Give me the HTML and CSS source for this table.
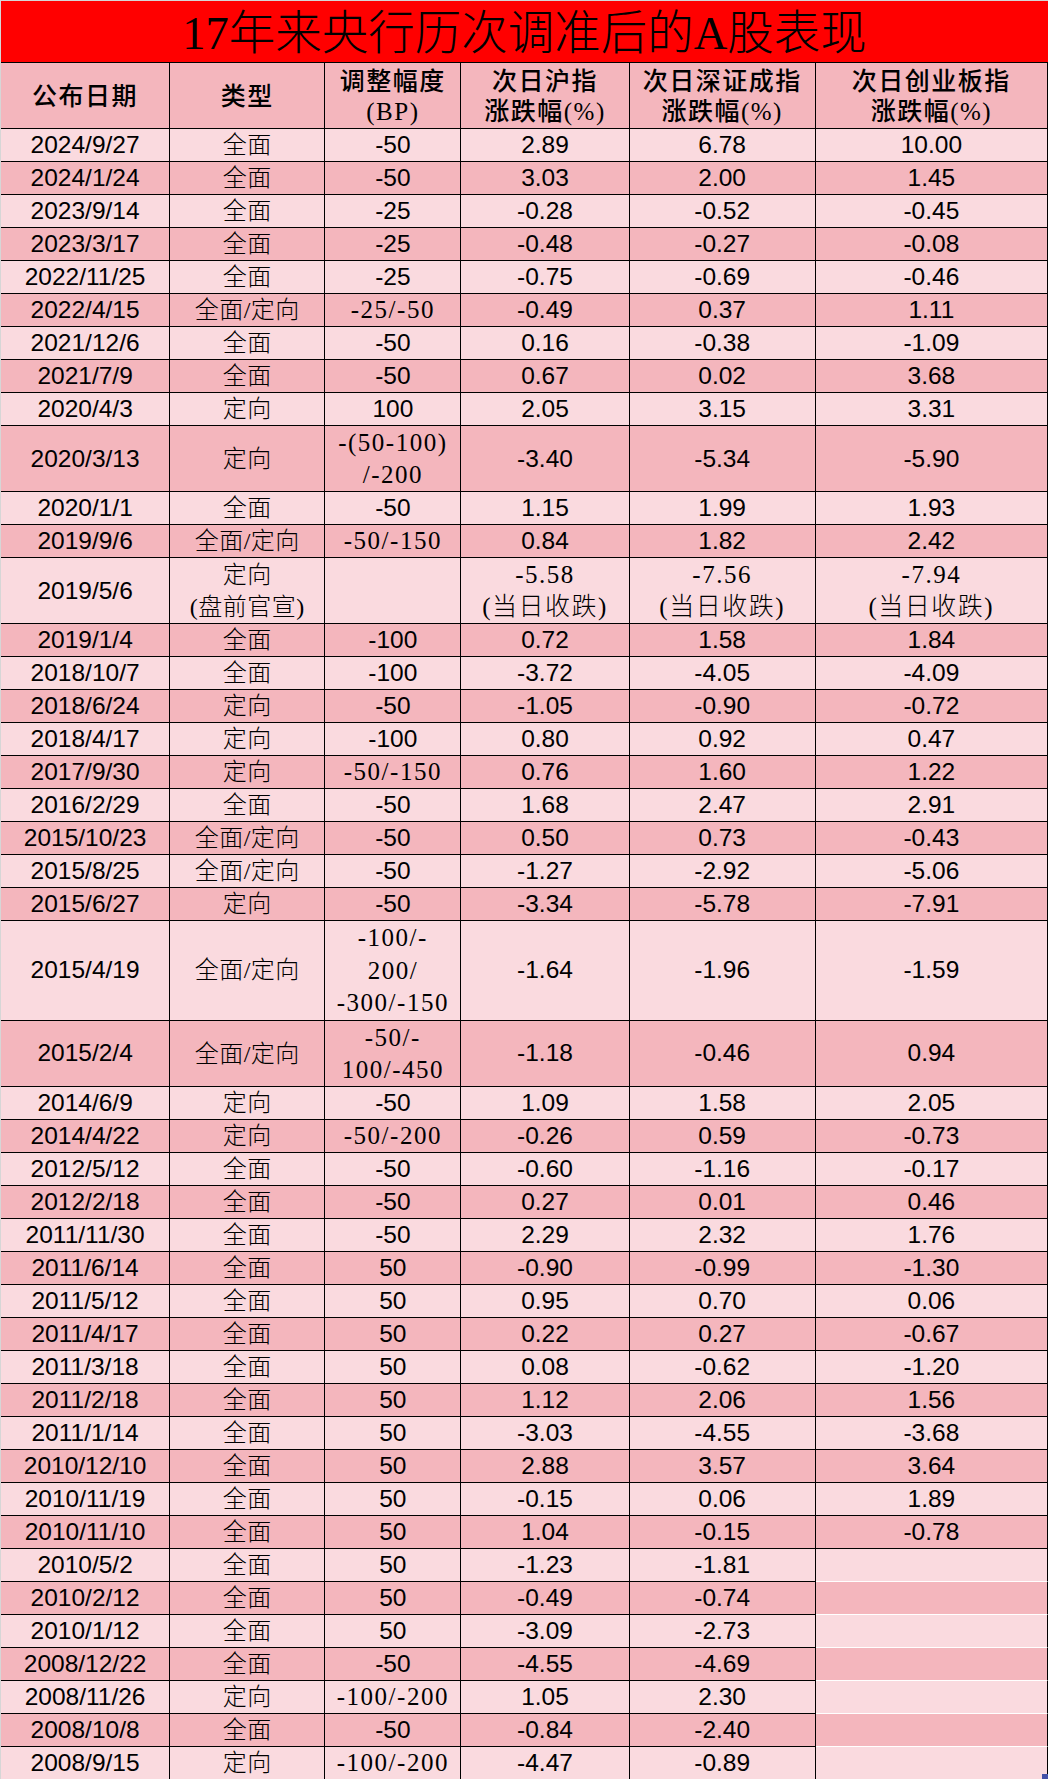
FILE: index.html
```html
<!DOCTYPE html>
<html lang="zh-CN">
<head>
<meta charset="utf-8">
<title>17年来央行历次调准后的A股表现</title>
<link rel="stylesheet" href="styles.css">
</head>
<body>
<div class="sheet">
<table class="grid">
<colgroup>
<col class="c1"><col class="c2"><col class="c3"><col class="c4"><col class="c5"><col class="c6">
</colgroup>
<thead>
<tr class="title-row"><td class="title" colspan="6">17年来央行历次调准后的A股表现</td></tr>
<tr class="head-row">
<td class="hd">公布日期</td>
<td class="hd">类型</td>
<td class="hd">调整幅度<br>(BP)</td>
<td class="hd">次日沪指<br>涨跌幅(%)</td>
<td class="hd">次日深证成指<br>涨跌幅(%)</td>
<td class="hd">次日创业板指<br>涨跌幅(%)</td>
</tr>
</thead>
<tbody>
<tr><td class="n">2024/9/27</td><td class="z">全面</td><td class="n">-50</td><td class="n">2.89</td><td class="n">6.78</td><td class="n">10.00</td></tr>
<tr><td class="n">2024/1/24</td><td class="z">全面</td><td class="n">-50</td><td class="n">3.03</td><td class="n">2.00</td><td class="n">1.45</td></tr>
<tr><td class="n">2023/9/14</td><td class="z">全面</td><td class="n">-25</td><td class="n">-0.28</td><td class="n">-0.52</td><td class="n">-0.45</td></tr>
<tr><td class="n">2023/3/17</td><td class="z">全面</td><td class="n">-25</td><td class="n">-0.48</td><td class="n">-0.27</td><td class="n">-0.08</td></tr>
<tr><td class="n">2022/11/25</td><td class="z">全面</td><td class="n">-25</td><td class="n">-0.75</td><td class="n">-0.69</td><td class="n">-0.46</td></tr>
<tr><td class="n">2022/4/15</td><td class="z">全面/定向</td><td class="s">-25/-50</td><td class="n">-0.49</td><td class="n">0.37</td><td class="n">1.11</td></tr>
<tr><td class="n">2021/12/6</td><td class="z">全面</td><td class="n">-50</td><td class="n">0.16</td><td class="n">-0.38</td><td class="n">-1.09</td></tr>
<tr><td class="n">2021/7/9</td><td class="z">全面</td><td class="n">-50</td><td class="n">0.67</td><td class="n">0.02</td><td class="n">3.68</td></tr>
<tr><td class="n">2020/4/3</td><td class="z">定向</td><td class="n">100</td><td class="n">2.05</td><td class="n">3.15</td><td class="n">3.31</td></tr>
<tr class="h2"><td class="n">2020/3/13</td><td class="z">定向</td><td class="s">-(50-100)<br>/-200</td><td class="n">-3.40</td><td class="n">-5.34</td><td class="n">-5.90</td></tr>
<tr><td class="n">2020/1/1</td><td class="z">全面</td><td class="n">-50</td><td class="n">1.15</td><td class="n">1.99</td><td class="n">1.93</td></tr>
<tr><td class="n">2019/9/6</td><td class="z">全面/定向</td><td class="s">-50/-150</td><td class="n">0.84</td><td class="n">1.82</td><td class="n">2.42</td></tr>
<tr class="h2"><td class="n">2019/5/6</td><td class="z">定向<br>(盘前官宣)</td><td class="s"></td><td class="s">-5.58<br>(当日收跌)</td><td class="s">-7.56<br>(当日收跌)</td><td class="s">-7.94<br>(当日收跌)</td></tr>
<tr><td class="n">2019/1/4</td><td class="z">全面</td><td class="n">-100</td><td class="n">0.72</td><td class="n">1.58</td><td class="n">1.84</td></tr>
<tr><td class="n">2018/10/7</td><td class="z">全面</td><td class="n">-100</td><td class="n">-3.72</td><td class="n">-4.05</td><td class="n">-4.09</td></tr>
<tr><td class="n">2018/6/24</td><td class="z">定向</td><td class="n">-50</td><td class="n">-1.05</td><td class="n">-0.90</td><td class="n">-0.72</td></tr>
<tr><td class="n">2018/4/17</td><td class="z">定向</td><td class="n">-100</td><td class="n">0.80</td><td class="n">0.92</td><td class="n">0.47</td></tr>
<tr><td class="n">2017/9/30</td><td class="z">定向</td><td class="s">-50/-150</td><td class="n">0.76</td><td class="n">1.60</td><td class="n">1.22</td></tr>
<tr><td class="n">2016/2/29</td><td class="z">全面</td><td class="n">-50</td><td class="n">1.68</td><td class="n">2.47</td><td class="n">2.91</td></tr>
<tr><td class="n">2015/10/23</td><td class="z">全面/定向</td><td class="n">-50</td><td class="n">0.50</td><td class="n">0.73</td><td class="n">-0.43</td></tr>
<tr><td class="n">2015/8/25</td><td class="z">全面/定向</td><td class="n">-50</td><td class="n">-1.27</td><td class="n">-2.92</td><td class="n">-5.06</td></tr>
<tr><td class="n">2015/6/27</td><td class="z">定向</td><td class="n">-50</td><td class="n">-3.34</td><td class="n">-5.78</td><td class="n">-7.91</td></tr>
<tr class="h3"><td class="n">2015/4/19</td><td class="z">全面/定向</td><td class="s">-100/-<br>200/<br>-300/-150</td><td class="n">-1.64</td><td class="n">-1.96</td><td class="n">-1.59</td></tr>
<tr class="h2"><td class="n">2015/2/4</td><td class="z">全面/定向</td><td class="s">-50/-<br>100/-450</td><td class="n">-1.18</td><td class="n">-0.46</td><td class="n">0.94</td></tr>
<tr><td class="n">2014/6/9</td><td class="z">定向</td><td class="n">-50</td><td class="n">1.09</td><td class="n">1.58</td><td class="n">2.05</td></tr>
<tr><td class="n">2014/4/22</td><td class="z">定向</td><td class="s">-50/-200</td><td class="n">-0.26</td><td class="n">0.59</td><td class="n">-0.73</td></tr>
<tr><td class="n">2012/5/12</td><td class="z">全面</td><td class="n">-50</td><td class="n">-0.60</td><td class="n">-1.16</td><td class="n">-0.17</td></tr>
<tr><td class="n">2012/2/18</td><td class="z">全面</td><td class="n">-50</td><td class="n">0.27</td><td class="n">0.01</td><td class="n">0.46</td></tr>
<tr><td class="n">2011/11/30</td><td class="z">全面</td><td class="n">-50</td><td class="n">2.29</td><td class="n">2.32</td><td class="n">1.76</td></tr>
<tr><td class="n">2011/6/14</td><td class="z">全面</td><td class="n">50</td><td class="n">-0.90</td><td class="n">-0.99</td><td class="n">-1.30</td></tr>
<tr><td class="n">2011/5/12</td><td class="z">全面</td><td class="n">50</td><td class="n">0.95</td><td class="n">0.70</td><td class="n">0.06</td></tr>
<tr><td class="n">2011/4/17</td><td class="z">全面</td><td class="n">50</td><td class="n">0.22</td><td class="n">0.27</td><td class="n">-0.67</td></tr>
<tr><td class="n">2011/3/18</td><td class="z">全面</td><td class="n">50</td><td class="n">0.08</td><td class="n">-0.62</td><td class="n">-1.20</td></tr>
<tr><td class="n">2011/2/18</td><td class="z">全面</td><td class="n">50</td><td class="n">1.12</td><td class="n">2.06</td><td class="n">1.56</td></tr>
<tr><td class="n">2011/1/14</td><td class="z">全面</td><td class="n">50</td><td class="n">-3.03</td><td class="n">-4.55</td><td class="n">-3.68</td></tr>
<tr><td class="n">2010/12/10</td><td class="z">全面</td><td class="n">50</td><td class="n">2.88</td><td class="n">3.57</td><td class="n">3.64</td></tr>
<tr><td class="n">2010/11/19</td><td class="z">全面</td><td class="n">50</td><td class="n">-0.15</td><td class="n">0.06</td><td class="n">1.89</td></tr>
<tr><td class="n">2010/11/10</td><td class="z">全面</td><td class="n">50</td><td class="n">1.04</td><td class="n">-0.15</td><td class="n">-0.78</td></tr>
<tr><td class="n">2010/5/2</td><td class="z">全面</td><td class="n">50</td><td class="n">-1.23</td><td class="n">-1.81</td><td class="blank"></td></tr>
<tr><td class="n">2010/2/12</td><td class="z">全面</td><td class="n">50</td><td class="n">-0.49</td><td class="n">-0.74</td><td class="blank"></td></tr>
<tr><td class="n">2010/1/12</td><td class="z">全面</td><td class="n">50</td><td class="n">-3.09</td><td class="n">-2.73</td><td class="blank"></td></tr>
<tr><td class="n">2008/12/22</td><td class="z">全面</td><td class="n">-50</td><td class="n">-4.55</td><td class="n">-4.69</td><td class="blank"></td></tr>
<tr><td class="n">2008/11/26</td><td class="z">定向</td><td class="s">-100/-200</td><td class="n">1.05</td><td class="n">2.30</td><td class="blank"></td></tr>
<tr><td class="n">2008/10/8</td><td class="z">全面</td><td class="n">-50</td><td class="n">-0.84</td><td class="n">-2.40</td><td class="blank"></td></tr>
<tr><td class="n">2008/9/15</td><td class="z">定向</td><td class="s">-100/-200</td><td class="n">-4.47</td><td class="n">-0.89</td><td class="blank last"></td></tr>
</tbody>
</table>
<span class="handle"></span>
</div>
</body>
</html>
```

FILE: styles.css
```css
html, body {
  margin: 0;
  padding: 0;
}
body {
  background: #d6d6d6;
  padding: 1px 0 0 1px;
  width: 1047px;
  height: 1778px;
  overflow: hidden;
}
.sheet {
  position: relative;
  width: 1047px;
}
.grid {
  width: 1047px;
  table-layout: fixed;
  border-collapse: separate;
  border-spacing: 0;
  color: #000;
}
.c1 { width: 169px; }
.c2 { width: 155px; }
.c3 { width: 136px; }
.c4 { width: 168px; }
.c5 { width: 186px; }
.c6 { width: 232px; }

.grid td {
  padding: 0;
  border-right: 1px solid #000;
  border-bottom: 1px solid #000;
  text-align: center;
  vertical-align: middle;
  white-space: nowrap;
  overflow: hidden;
}

.title-row { height: 62px; }
.grid td.title {
  height: 57px;
  background: #ff0000;
  border-right: none;
  font-family: "Liberation Serif", "Noto Sans CJK SC", serif;
  font-size: 46.5px;
  font-weight: 300;
  line-height: 50px;
  padding-top: 4px;
}

.head-row { height: 66px; }
.grid td.hd {
  height: 63px;
  background: #f4b6bd;
  font-family: "Liberation Serif", "Noto Sans CJK SC", serif;
  font-size: 25px;
  font-weight: 500;
  letter-spacing: 1.5px;
  line-height: 30px;
  padding-top: 2px;
}

.grid tbody tr { height: 33px; }
.grid tbody tr td { height: 32px; }
.grid tbody tr.h2 td { height: 65px; }
.grid tbody tr.h3 td { height: 98px; }

.grid tbody tr:nth-child(odd) td { background: #fadadf; }
.grid tbody tr:nth-child(even) td { background: #f4b6bd; }

.grid td.n {
  font-family: "Liberation Sans", Arial, sans-serif;
  font-size: 24.5px;
  line-height: 28px;
}
.grid td.z {
  font-family: "Liberation Serif", "Noto Sans CJK SC", serif;
  font-size: 24px;
  font-weight: 300;
  line-height: 28px;
  letter-spacing: 0.5px;
}
.grid td.s {
  font-family: "Liberation Serif", "Noto Sans CJK SC", serif;
  font-size: 25px;
  font-weight: 300;
  line-height: 28px;
  letter-spacing: 1.5px;
}
.grid tr.h2 td.z,
.grid tr.h2 td.s {
  line-height: 32px;
  padding-top: 1px;
  height: 64px;
}
.grid tr.h3 td.s {
  line-height: 32.5px;
  padding-top: 1px;
  height: 97px;
}
.grid td.blank {
  border-bottom-color: #ffffff;
}
.grid td.blank.last {
  border-bottom-color: #000;
}
.handle {
  position: absolute;
  right: 0;
  bottom: 0;
  width: 6px;
  height: 6px;
  background: #4452a8;
}
```
